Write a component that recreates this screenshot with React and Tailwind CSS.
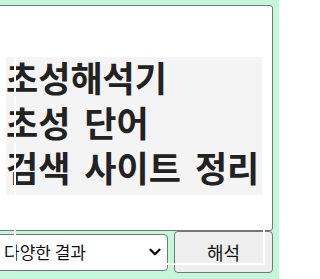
import { ChevronDown } from "lucide-react"

const lines = ["초성해석기", "초성 단어", "검색 사이트 정리"]

const App = () => {
  return (
    <div
      className="relative w-[279px] h-[279px] overflow-hidden bg-[#c4f7da]"
      style={{ fontFamily: '"Noto Sans CJK KR", "Noto Sans", sans-serif' }}
    >
      <div className="ml-[-5px] mr-[6px] pt-[5px] flex flex-col">
        {/* editor */}
        <div className="h-[226px] bg-white border border-[#767676] rounded-r-[3px] pl-[10px] pr-[10px] pt-[51px]">
          <div className="bg-[#f4f4f4] flex flex-col pb-[6px]">
            <div className="mt-[-3px]">
              {lines.map(line => (
                <div
                  key={line}
                  className="text-[35px] leading-[45px] font-bold text-[#222] whitespace-nowrap [word-spacing:6px]"
                >
                  {line}
                </div>
              ))}
            </div>
          </div>
        </div>

        {/* controls */}
        <div className="flex items-center gap-[6px] h-[42px]">
          <div className="w-[173px] h-[37px] bg-white border border-[#767676] rounded-[4px] flex items-center justify-between pl-[8px] pr-[3px]">
            <span className="text-[17px] text-[#111]">다양한 결과</span>
            <ChevronDown className="w-[18px] h-[18px] text-black" strokeWidth={3} />
          </div>
          <button className="flex-1 h-[42px] bg-[#efefef] border border-[#767676] rounded-[4px] text-[18px] text-[#111] flex items-center justify-center">
            해석
          </button>
        </div>
      </div>

      {/* overlay outline */}
      <div className="absolute left-[14px] top-[30px] w-[251px] h-[235px] border-2 border-white pointer-events-none" />
    </div>
  )
}

export default App
